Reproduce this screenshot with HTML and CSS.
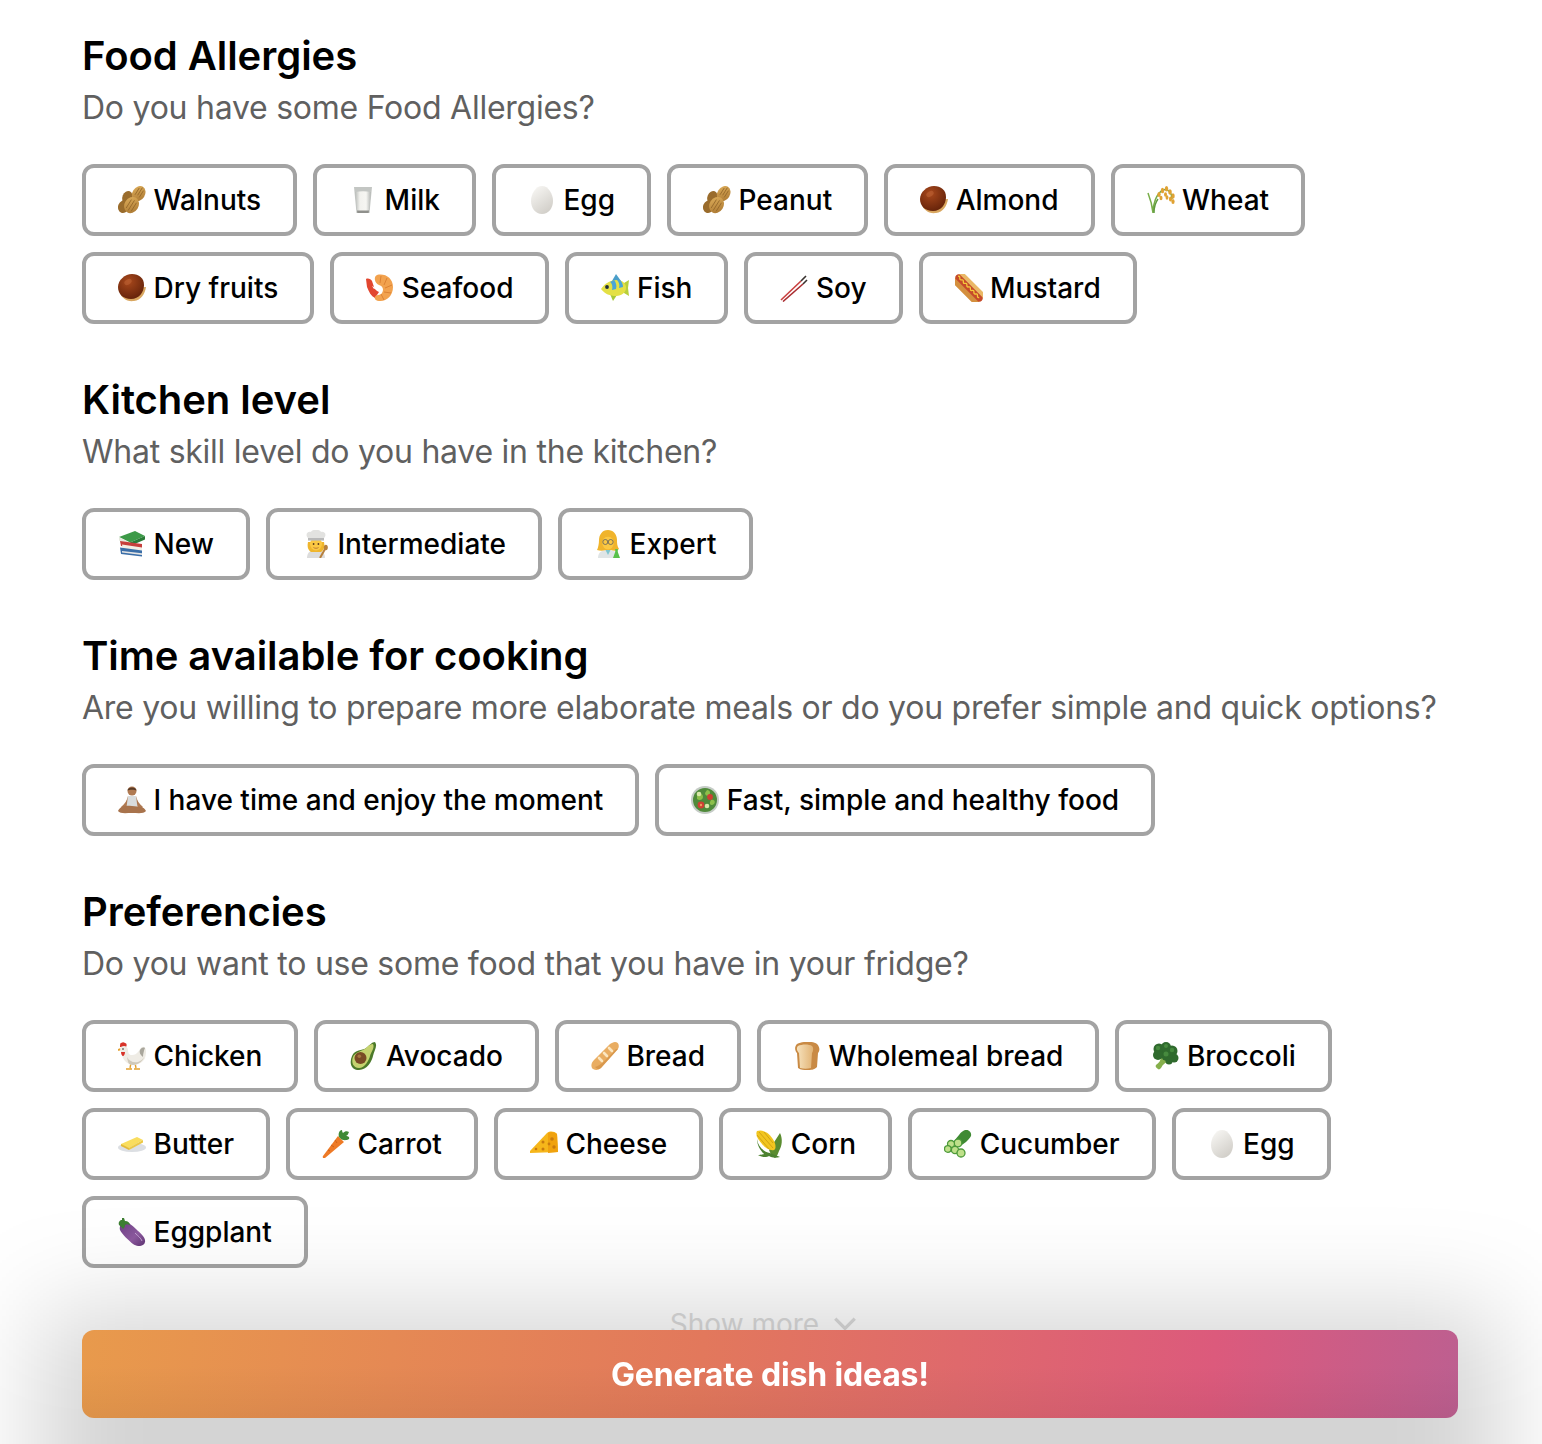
FILE: index.html
```html
<!DOCTYPE html>
<html lang="en">
<head>
<meta charset="utf-8">
<title>Dish preferences</title>
<link rel="stylesheet" href="styles.css">
</head>
<body>
<svg class="sprite" aria-hidden="true">
  <defs>
    <linearGradient id="eggG" x1="0.2" y1="0" x2="0.8" y2="1"><stop offset="0" stop-color="#f7f6f3"/><stop offset="1" stop-color="#cfccc6"/></linearGradient>
    <radialGradient id="nutG" cx="0.4" cy="0.3" r="0.8"><stop offset="0" stop-color="#a8481c"/><stop offset="1" stop-color="#5e1f08"/></radialGradient>
    <linearGradient id="peanutG" x1="0" y1="0" x2="1" y2="1"><stop offset="0" stop-color="#e0b05c"/><stop offset="1" stop-color="#a87530"/></linearGradient>
    <linearGradient id="plantG" x1="0" y1="0" x2="1" y2="1"><stop offset="0" stop-color="#6c3f85"/><stop offset="0.6" stop-color="#8d5a9f"/><stop offset="1" stop-color="#5f3473"/></linearGradient>
    <linearGradient id="breadG" x1="0" y1="0" x2="1" y2="0"><stop offset="0" stop-color="#f6e2bd"/><stop offset="1" stop-color="#e2b374"/></linearGradient>
    <linearGradient id="milkG" x1="0" y1="0" x2="1" y2="0"><stop offset="0" stop-color="#b9bcb9"/><stop offset=".3" stop-color="#f2f2ee"/><stop offset=".7" stop-color="#f6f6f2"/><stop offset="1" stop-color="#b4b7b4"/></linearGradient>
  </defs>
  <symbol id="e-peanut" viewBox="0 0 28 28">
    <g transform="translate(7.500 16) rotate(22)" fill="#9a6c2c">
      <ellipse cx="0" cy="-5" rx="5" ry="6.500"/><ellipse cx="0" cy="5" rx="5.500" ry="6.500"/>
    </g>
    <g transform="translate(17 13.500) rotate(32)">
      <ellipse cx="0" cy="-7" rx="6.300" ry="8" fill="url(#peanutG)"/><ellipse cx="0" cy="6.500" rx="7" ry="8.500" fill="url(#peanutG)"/>
      <path d="M-2.500-12v8M2.500-12v8M-3 2v10M3 2v10M0-14v9M0 1v12" stroke="#94672a" stroke-width=".8" fill="none"/>
    </g>
  </symbol>
  <symbol id="e-milk" viewBox="0 0 28 28">
    <path d="M5 1h18l-2.500 26h-13z" fill="#c3c6c3"/>
    <path d="M6.200 6c5-1 10.600-1 15.600 0l-1.900 19H8.100z" fill="url(#milkG)"/>
    <path d="M8 24.500h12l-.4 2.500H8.400z" fill="#8f908c"/>
  </symbol>
  <symbol id="e-egg" viewBox="0 0 28 28">
    <path d="M14 0c6.500 0 11 8 11 15s-4.500 13-11 13S3 22 3 15 7.500 0 14 0z" fill="url(#eggG)"/>
  </symbol>
  <symbol id="e-nut" viewBox="0 0 28 28">
    <path d="M1 15c1 9 8 13 15 12s11-7 12-14z" fill="#d9a760"/>
    <path d="M14 0c7 0 12 4 12 11s-5 14-13 14S0 20 0 13 7 0 14 0z" fill="url(#nutG)"/>
    <ellipse cx="10" cy="8" rx="4" ry="2.500" fill="#c1683a" opacity=".5" transform="rotate(-30 10 8)"/>
  </symbol>
  <symbol id="e-shrimp" viewBox="0 0 28 28">
    <path d="M0 5c2-1 5 0 6 2l2 6c1 3 3 4 5 5l-4 6C5 22 3 18 1 13z" fill="#e2462f"/>
    <path d="M11 1c8-2 16 3 16 12s-7 15-14 14c-3 0-5-2-4-4 1-3 5-1 7-4s1-7-3-8-6-8-2-10z" fill="#f2a24e"/>
    <path d="M15 2l-1 7M21 4l-3 7M26 11l-7 3M25 19l-7-1M18 26l-3-6" stroke="#dc8233" stroke-width="1" fill="none"/>
    <path d="M6 12l4 2-2 1z" fill="#fff"/>
  </symbol>
  <symbol id="e-fish" viewBox="0 0 28 28">
    <path d="M23 9l5-3-1 8 1 8-5-3z" fill="#b9cf3a"/>
    <path d="M15 0l5 7-9 0z" fill="#4a9ec9"/>
    <path d="M12 27l4-6-7-1z" fill="#a9c938"/>
    <path d="M0 15C4 9 10 6 16 6s9 4 9 8-4 8-10 8S4 20 0 15z" fill="#e4e045"/>
    <path d="M9 8c2 1 3 5 2 8l4-1c1-3 0-7-2-9zM16 6c2 2 3 5 2 8l4-1c0-3-1-5-3-7z" fill="#4aa5d6"/>
    <circle cx="6" cy="13" r="1.900" fill="#1d2c3a"/>
  </symbol>
  <symbol id="e-chop" viewBox="0 0 28 28">
    <path d="M1 26L21 7" stroke="#c9403f" stroke-width="1.600"/>
    <path d="M3 27.500L23 10" stroke="#a92c30" stroke-width="1.600"/>
    <path d="M21 7l5-5M23 10l4-4" stroke="#39322f" stroke-width="1.600"/>
  </symbol>
  <symbol id="e-hotdog" viewBox="0 0 28 28">
    <g transform="rotate(45 14 14)">
      <rect x="-3" y="7" width="34" height="8" rx="4" fill="#eab866"/>
      <rect x="-3" y="14" width="34" height="8" rx="4" fill="#d48f3e"/>
      <rect x="-4" y="11" width="36" height="6" rx="3" fill="#c64a2a"/>
      <path d="M-2 13.500c2-3 3 3 5 0s3 3 5 0 3 3 5 0 3 3 5 0 3 3 5 0 3 3 5 0" stroke="#f4cc3c" stroke-width="1.300" fill="none"/>
    </g>
  </symbol>
  <symbol id="e-wheat" viewBox="0 0 28 28">
    <path d="M6 27C5 18 3 12 1 7M6 27C6 18 9 8 16 4c5-2 9 3 9 9" stroke="#78ad48" stroke-width="1.500" fill="none"/>
    <path d="M7 27c0-6 1-10 4-14" stroke="#5d9a3c" stroke-width="1.400" fill="none"/>
    <g fill="#e0a233">
      <ellipse cx="12" cy="8.500" rx="1.700" ry="2.600"/><ellipse cx="15.500" cy="4.500" rx="1.700" ry="2.800"/><ellipse cx="19.500" cy="2.800" rx="1.700" ry="2.700"/><ellipse cx="23" cy="6" rx="1.800" ry="2.800"/><ellipse cx="26" cy="10" rx="1.700" ry="2.800"/><ellipse cx="23.500" cy="13" rx="1.600" ry="2.600"/><ellipse cx="26" cy="15.500" rx="1.600" ry="2.500"/><ellipse cx="14" cy="12" rx="1.500" ry="2.300"/><ellipse cx="18.500" cy="8.500" rx="1.500" ry="2.300"/><ellipse cx="20" cy="11.500" rx="1.400" ry="2.200"/>
    </g>
  </symbol>
  <symbol id="e-books" viewBox="0 0 28 28">
    <path d="M1 7l16-6 10 5-15 6.500z" fill="#3d9a48"/>
    <path d="M1 7v3.500l11 5.500v-3.500z" fill="#e6eadf"/><path d="M12 12.500V16l15-6.500V6z" fill="#2a7b37"/>
    <path d="M2 11l22 3v5L3 16z" fill="#c63f3b"/>
    <path d="M4 14.500l20 3v3H5z" fill="#f3eee4"/>
    <path d="M2 17.500l22 3v6L3 24z" fill="#3a6ea8"/>
    <path d="M4 21l20 2.300V25L4 22.600z" fill="#e5e5e5"/>
  </symbol>
  <symbol id="e-cook" viewBox="0 0 28 28">
    <path d="M5 28c0-6 4-8 9-8s9 2 9 8z" fill="#dcdcdc"/>
    <path d="M6 12c-1 5 0 8 3 10h10c3-2 4-5 3-10z" fill="#efb52c"/>
    <ellipse cx="14" cy="14" rx="6" ry="6.500" fill="#fbc843"/>
    <circle cx="11.600" cy="14" r=".9" fill="#5a3a1c"/><circle cx="16.400" cy="14" r=".9" fill="#5a3a1c"/>
    <path d="M11.500 17.500c1.300 1 3.700 1 5 0" stroke="#b06a30" stroke-width=".8" fill="none"/>
    <path d="M6 8c-3-3-1-7 3-6 1-3 9-3 10 0 4-1 6 3 3 6v2H6z" fill="#e2e2e0"/>
    <rect x="6" y="8" width="16" height="2.600" fill="#b9b9b9"/>
    <path d="M18 28l5-9" stroke="#b7803e" stroke-width="2"/><ellipse cx="23.800" cy="17.500" rx="2" ry="2.800" fill="#b7803e"/>
  </symbol>
  <symbol id="e-sci" viewBox="0 0 28 28">
    <path d="M4 28c0-6 4-8 10-8s10 2 10 8z" fill="#e0e5e6"/>
    <path d="M11.500 20l2.500 5 2.500-5z" fill="#7fc6d0"/>
    <path d="M14 0C8 0 5 5 5 10c0 4-1 8-2 10 3 1 6 1 9 0h5c3 1 6 1 8-1-2-3-2-6-2-9 0-6-4-10-9-10z" fill="#f0b42c"/>
    <ellipse cx="14" cy="13" rx="5.800" ry="6.500" fill="#fbc843"/>
    <path d="M7.500 8c4-1 8-2 12-1-1-3-3-4-6-4S8 5 7.500 8z" fill="#f0b42c"/>
    <circle cx="11.300" cy="12" r="2.500" fill="none" stroke="#5e5e5e" stroke-width=".8"/><circle cx="16.700" cy="12" r="2.500" fill="none" stroke="#5e5e5e" stroke-width=".8"/>
    <path d="M19 28l2.200-6v-3h2.600v3l2.200 6z" fill="#59c14b"/>
  </symbol>
  <symbol id="e-lotus" viewBox="0 0 28 28">
    <circle cx="14" cy="5" r="4.500" fill="#b07a52"/>
    <path d="M9.500 4.500c0-4 9-4 9 0-2-1-7-1-9 0z" fill="#5a3b26"/>
    <path d="M10 10c-1 4-3 8-7 11l2 2c5-2 6-6 7-10zM18 10c1 4 3 8 7 11l-2 2c-5-2-6-6-7-10z" fill="#b07a52"/>
    <path d="M10 10h8l1.500 11h-11z" fill="#d9dcdd"/>
    <path d="M0 25c2-5 7-6 14-5s12 0 14 5c-2 3-8 2-14 2s-12 1-14-2z" fill="#a8734c"/>
  </symbol>
  <symbol id="e-salad" viewBox="0 0 28 28">
    <circle cx="14" cy="14" r="14" fill="#c5ccc6"/>
    <circle cx="14" cy="14" r="12" fill="#4f8a3a"/>
    <path d="M6 9c3-3 6-1 6 2s-4 4-6 2zM16 4c3 0 4 3 2 5s-4 0-4-2zM20 14c3-1 5 2 3 4s-5 1-4-2z" fill="#8cbf4a"/>
    <circle cx="10" cy="19" r="3.400" fill="#cf3f33"/><circle cx="19" cy="11" r="2.900" fill="#cf3f33"/><circle cx="8" cy="8" r="2.300" fill="#d8e7a8"/><circle cx="16" cy="20" r="2.300" fill="#d8e7a8"/>
    <circle cx="10" cy="19" r="1.200" fill="#e9a05c"/>
  </symbol>
  <symbol id="e-chicken" viewBox="0 0 28 28">
    <path d="M2 4c0-3 1-4 2-3 0-1 2-1 3 0 2 0 2 3 1 4H2z" fill="#d8332a"/>
    <path d="M13 21l-1 5M17 21l1 5M8 27h6M16 27h6" stroke="#e4a12e" stroke-width="1.400"/>
    <path d="M0 8l3-1" stroke="#e4a12e" stroke-width="2"/>
    <path d="M2 7c0-2 2-3 4-3s4 2 4 4c0 3 1 5 4 5s4-1 6-3 3-6 6-5 2 8 1 11-6 7-11 7-9-3-11-7-2-6-3-9z" fill="#efece5"/>
    <path d="M9 15c2 4 6 6 11 5 3-1 5-3 6-5-1 4-6 8-11 8s-5-3-6-8z" fill="#cfc9bb"/>
    <path d="M3 10c0 2 1 4 2 4s2-2 2-4z" fill="#d8332a"/>
    <path d="M22 8c1-2 3-3 5-2-1 2-2 6-2 9-3-2-4-5-3-7z" fill="#a9a69c"/>
    <circle cx="5" cy="7" r=".8" fill="#222"/>
  </symbol>
  <symbol id="e-avocado" viewBox="0 0 28 28">
    <path d="M25 0c3 4-1 9-2 14s-6 14-14 14S-1 21 2 14 12 9 16 6s6-6 9-6z" fill="#4c7a2a"/>
    <path d="M23 2c2 4-2 8-3 12s-5 12-11 12-8-6-6-11 10-6 13-9 5-4 7-4z" fill="#c5d26f"/>
    <circle cx="10.500" cy="16" r="6" fill="#7a4a25"/>
    <circle cx="9.300" cy="14.300" r="1.800" fill="#a5753f"/>
  </symbol>
  <symbol id="e-baguette" viewBox="0 0 28 28">
    <path d="M24 0c3 0 5 3 3 7L10 26c-3 3-8 2-9 0s-1-5 2-8L19 2c2-1 3-2 5-2z" fill="#e9ad62"/>
    <path d="M4 25c6-1 14-11 21-18l2 0L10 26c-2 2-4 1-6-1z" fill="#cf8a3e" opacity=".6"/>
    <path d="M18 6l3 3M13 11l3 3M8 16l3 3" stroke="#fbe6c0" stroke-width="2.600" stroke-linecap="round"/>
  </symbol>
  <symbol id="e-bread" viewBox="0 0 28 28">
    <path d="M4 2c6-3 16-3 20 0 3 3 3 7 1 9l-1 14c-3 3-6 3-10 3-3 0-6 0-9-2L4 11C2 9 1 5 4 2z" fill="#c98a44"/>
    <path d="M5 4c4-2 11-2 14 0 2 2 1 6 0 7l-1 15c-4 1-7 1-11 0L6 11C4 9 3 6 5 4z" fill="url(#breadG)"/>
  </symbol>
  <symbol id="e-broccoli" viewBox="0 0 28 28">
    <path d="M7 27c-2-1-3-3-2-4 3-2 5-5 5-8l8 4c-3 1-6 3-8 7-1 1-2 2-3 1z" fill="#86b04c"/>
    <g fill="#2f6a2d">
      <circle cx="8" cy="7" r="5.500"/><circle cx="15" cy="5" r="5"/><circle cx="21" cy="9" r="5.500"/><circle cx="23" cy="16" r="4.500"/><circle cx="16" cy="13" r="6"/><circle cx="7" cy="13" r="5"/><circle cx="18" cy="19" r="3.500"/>
    </g>
    <g fill="#468a3e"><circle cx="7" cy="6" r="2.200"/><circle cx="15" cy="4" r="2"/><circle cx="21" cy="8" r="2.200"/><circle cx="15" cy="12" r="2.500"/></g>
  </symbol>
  <symbol id="e-butter" viewBox="0 0 28 28">
    <ellipse cx="14" cy="17.500" rx="14" ry="4.500" fill="#dcdfe3"/>
    <path d="M3 14l16-7 6 3-14 8-8-2z" fill="#f9dd5e"/>
    <path d="M3 14v2l8 4v-2z" fill="#e3b93a"/><path d="M11 18v2l14-7.500V10z" fill="#ecc845"/>
  </symbol>
  <symbol id="e-carrot" viewBox="0 0 28 28">
    <path d="M16 6l6 6L3 28c-1 1-3 0-2-2z" fill="#ee7a26"/>
    <path d="M9 15l3 2M13 10l2 3M6 20l2 1" stroke="#c95d16" stroke-width=".9"/>
    <path d="M17 7c-1-3 0-7 3-7 0 2 1 3 1 3 2-2 4-2 6-1-1 2-1 3-3 4 2 0 4 1 3 3-3 2-7 1-8 0z" fill="#3f8a35"/>
  </symbol>
  <symbol id="e-cheese" viewBox="0 0 28 28">
    <path d="M0 21L17 3c3-2 7-2 10 1l1 18-28 1z" fill="#f6b61a"/>
    <path d="M18 3c3-2 6-1 9 1l1 18-10 1z" fill="#f0a20e"/>
    <g fill="#c97b0e"><circle cx="22" cy="9" r="1.800"/><circle cx="24" cy="17" r="1.700"/><circle cx="19" cy="14" r="1.400"/><circle cx="13" cy="12" r="1.500"/><circle cx="6" cy="19" r="1.300"/><circle cx="13" cy="19" r="1.500"/></g>
  </symbol>
  <symbol id="e-corn" viewBox="0 0 28 28">
    <path d="M25 3c3 6 2 13-1 18-1 3-2 5-4 7-3-2-5-5-6-8z" fill="#5a8c30"/>
    <path d="M2 1c6-2 13 2 17 10 2 4 2 8 0 9-3 1-8-1-12-6S0 5 2 1z" fill="#f2c61f"/>
    <path d="M4 2l14 16M9 2l9 11M2 5l12 14" stroke="#c99a10" stroke-width=".8"/>
    <path d="M2 9c1 8 7 13 13 14 3 1 7 3 10 4-4 1-8 1-11-1-3 2-8 1-11-1 3 0 6-1 6-1C5 20 2 15 2 9z" fill="#4c8230"/>
  </symbol>
  <symbol id="e-cucumber" viewBox="0 0 28 28">
    <path d="M21 0c3-1 7 2 6 6-1 2-3 4-5 6l-7 5-5-6 5-6c2-3 4-4 6-5z" fill="#3f8a33"/>
    <g fill="#bfe08a" stroke="#4d9a3a" stroke-width="1.300">
      <circle cx="14" cy="13" r="3.800"/><circle cx="7" cy="14" r="3.500"/><circle cx="3.800" cy="19" r="3.300"/><circle cx="11" cy="20" r="3.600"/><circle cx="17" cy="23" r="4"/>
    </g>
  </symbol>
  <symbol id="e-eggplant" viewBox="0 0 28 28">
    <path d="M6 4c4 0 8 3 12 7s10 8 9 13-8 5-12 2S4 16 2 12C1 8 3 5 6 4z" fill="url(#plantG)"/>
    <path d="M1 7c-1-3 1-5 3-5L4 0h2l1 3c3 0 5 2 5 4-2-1-4-1-5 0 0 2-1 3-2 4-1-2-3-3-4-4z" fill="#3d7f33"/>
    <path d="M17 15c3 3 6 5 7 8" stroke="#c09fd0" stroke-width="1" fill="none"/>
  </symbol>
</svg>

<main class="page">
  <section class="group">
    <h2 class="title">Food Allergies</h2>
    <p class="lead">Do you have some Food Allergies?</p>
    <div class="chips">
      <button class="chip"><svg class="emoji"><use href="#e-peanut"/></svg>Walnuts</button>
      <button class="chip"><svg class="emoji"><use href="#e-milk"/></svg>Milk</button>
      <button class="chip"><svg class="emoji"><use href="#e-egg"/></svg>Egg</button>
      <button class="chip"><svg class="emoji"><use href="#e-peanut"/></svg>Peanut</button>
      <button class="chip"><svg class="emoji"><use href="#e-nut"/></svg>Almond</button>
      <button class="chip"><svg class="emoji"><use href="#e-wheat"/></svg>Wheat</button>
      <button class="chip"><svg class="emoji"><use href="#e-nut"/></svg>Dry fruits</button>
      <button class="chip"><svg class="emoji"><use href="#e-shrimp"/></svg>Seafood</button>
      <button class="chip"><svg class="emoji"><use href="#e-fish"/></svg>Fish</button>
      <button class="chip"><svg class="emoji"><use href="#e-chop"/></svg>Soy</button>
      <button class="chip"><svg class="emoji"><use href="#e-hotdog"/></svg>Mustard</button>
    </div>
  </section>
  <section class="group">
    <h2 class="title">Kitchen level</h2>
    <p class="lead">What skill level do you have in the kitchen?</p>
    <div class="chips">
      <button class="chip"><svg class="emoji"><use href="#e-books"/></svg>New</button>
      <button class="chip"><svg class="emoji"><use href="#e-cook"/></svg>Intermediate</button>
      <button class="chip"><svg class="emoji"><use href="#e-sci"/></svg>Expert</button>
    </div>
  </section>
  <section class="group">
    <h2 class="title">Time available for cooking</h2>
    <p class="lead">Are you willing to prepare more elaborate meals or do you prefer simple and quick options?</p>
    <div class="chips">
      <button class="chip"><svg class="emoji"><use href="#e-lotus"/></svg>I have time and enjoy the moment</button>
      <button class="chip"><svg class="emoji"><use href="#e-salad"/></svg>Fast, simple and healthy food</button>
    </div>
  </section>
  <section class="group">
    <h2 class="title">Preferencies</h2>
    <p class="lead">Do you want to use some food that you have in your fridge?</p>
    <div class="chips">
      <button class="chip"><svg class="emoji"><use href="#e-chicken"/></svg>Chicken</button>
      <button class="chip"><svg class="emoji"><use href="#e-avocado"/></svg>Avocado</button>
      <button class="chip"><svg class="emoji"><use href="#e-baguette"/></svg>Bread</button>
      <button class="chip"><svg class="emoji"><use href="#e-bread"/></svg>Wholemeal bread</button>
      <button class="chip"><svg class="emoji"><use href="#e-broccoli"/></svg>Broccoli</button>
      <button class="chip"><svg class="emoji"><use href="#e-butter"/></svg>Butter</button>
      <button class="chip"><svg class="emoji"><use href="#e-carrot"/></svg>Carrot</button>
      <button class="chip"><svg class="emoji"><use href="#e-cheese"/></svg>Cheese</button>
      <button class="chip"><svg class="emoji"><use href="#e-corn"/></svg>Corn</button>
      <button class="chip"><svg class="emoji"><use href="#e-cucumber"/></svg>Cucumber</button>
      <button class="chip"><svg class="emoji"><use href="#e-egg"/></svg>Egg</button>
      <button class="chip"><svg class="emoji"><use href="#e-eggplant"/></svg>Eggplant</button>
    </div>
    <div class="more">Show more<svg class="chev" viewBox="0 0 24 24"><path d="M3 7l9 9 9-9"/></svg></div>
  </section>
</main>
<div class="cta-bar">
  <button class="cta">Generate dish ideas!</button>
</div>
</body>
</html>
```

FILE: styles.css
```css
* { box-sizing: border-box; }
html, body { margin: 0; height: 1444px; overflow: hidden; background: #fff; }
body { font-family: Inter, "Liberation Sans", sans-serif; color: #000; }
.sprite { position: absolute; width: 0; height: 0; }
.page { padding: 28px 84px 0 82px; display: flex; flex-direction: column; gap: 48px; }
.title { margin: 0; font-size: 40px; line-height: 56px; font-weight: 600; letter-spacing: -0.05px; }
.lead { margin: 0; font-size: 32px; line-height: 48px; color: #606060; font-weight: 400; letter-spacing: -0.25px; }
.chips { display: flex; flex-wrap: wrap; gap: 16px; margin-top: 32px; }
.chip { display: inline-flex; align-items: center; height: 72px; padding: 0 32px; background: transparent; border: 4px solid #a3a3a3; border-radius: 12px; font: 500 28px Inter, "Liberation Sans", sans-serif; color: #000; }
.emoji { width: 28px; height: 28px; margin-right: 7.5px; flex: none; }
.more { display: flex; justify-content: center; align-items: center; gap: 13px; margin-top: 34px; padding-right: 12px; font-size: 28px; line-height: 44px; color: #dcdcdc; }
.chev { width: 26px; height: 26px; fill: none; stroke: #dcdcdc; stroke-width: 3; }
.cta-bar { position: fixed; left: 82px; right: 84px; bottom: 26px; height: 88px; border-radius: 12px; }
.cta-bar::before { content: ""; position: absolute; left: -42px; right: -42px; top: -20px; bottom: -160px; background: rgba(0, 0, 0, 0.17); filter: blur(50px); }
.cta { position: relative; width: 100%; height: 100%; border: 0; border-radius: 12px; font: 700 32px Inter, "Liberation Sans", sans-serif; letter-spacing: -0.15px; color: #fff; background: linear-gradient(180deg, rgba(0,0,0,0) 40%, rgba(0,0,0,0.05) 100%), linear-gradient(95deg, #e89a4c 0%, #e2785c 45%, #dc5a7c 82%, #bd5f90 100%); }
```
